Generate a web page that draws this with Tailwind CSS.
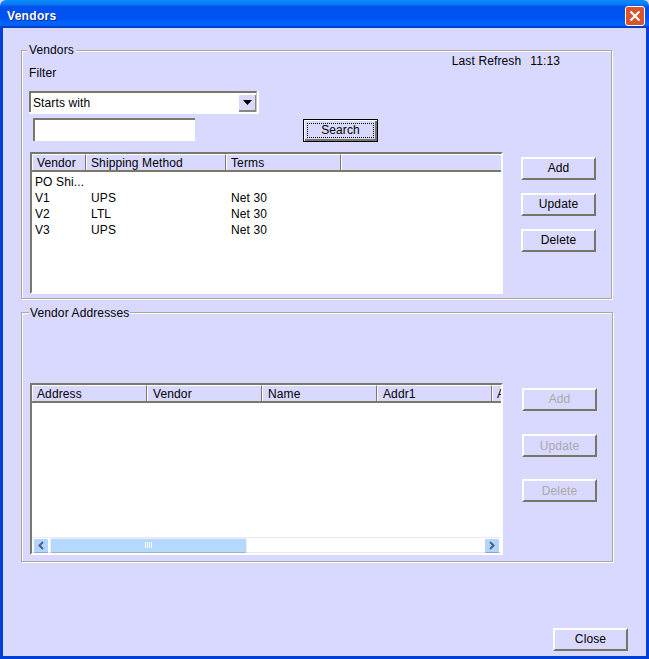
<!DOCTYPE html>
<html lang="en">
<head>
    <meta charset="UTF-8">
    <title>Vendors</title>
    <script src="https://cdn.jsdelivr.net/npm/@tailwindcss/browser@4"></script>
</head>
<body class="bg-[#d9d9ff]">
<div class="w-[649px] h-[659px] flex flex-col overflow-hidden bg-[#d9d9ff] text-[12px] leading-[16px] tracking-[0.12px] text-black font-['Liberation_Sans',Arial,sans-serif]">

    <!-- title bar -->
    <div class="h-[28px] shrink-0 flex items-center justify-between pl-[7px] pr-[4px] pt-[3px] bg-[linear-gradient(#0a8cfa_0,#0a7cf5_4px,#0052ee_7px,#0052f0_18px,#0062fc_22px,#0062fc_26px,#0040c8_26px)] rounded-t-[6px]">
        <span class="font-bold text-white tracking-[0.3px] [text-shadow:1px_1px_0_#0a2a90]">Vendors</span>
        <div class="w-[20px] h-[20px] rounded-[3px] border border-white bg-[#d9532c] flex items-center justify-center">
            <svg width="12" height="12" viewBox="0 0 12 12"><path d="M1.5 1.5L10.5 10.5M10.5 1.5L1.5 10.5" stroke="#fff" stroke-width="2.2"/></svg>
        </div>
    </div>

    <!-- window body -->
    <div class="flex-1 flex flex-col border-x-[3px] border-b-[3px] border-[#0040d8] pl-[18px] pr-[18px] pt-[22px]">

        <!-- Vendors group -->
        <div class="relative w-[591px] h-[249px] border border-[#aca899] shadow-[inset_1px_1px_0_#fff,1px_1px_0_#fff] pl-[7px]">
            <span class="absolute left-[5px] top-[-9px] px-[2px] bg-[#d9d9ff]">Vendors</span>
            <div class="h-[40px] flex justify-between pr-[51px]">
                <span class="pt-[14px]">Filter</span>
                <span class="pt-[2px] flex gap-[9px]"><span>Last Refresh</span><span>11:13</span></span>
            </div>
            <div class="w-[230px] h-[23px] bg-white flex items-start">
                <div class="w-[228px] h-[21px] border-t-2 border-l-2 border-t-[#7a7868] border-l-[#7a7868] border-r border-r-[#c8c6b8] flex items-center justify-between pl-[2px]">
                    <span>Starts with</span>
                    <div class="w-[17px] h-[17px] mt-[1px] bg-[#d9d9ff] border-r border-b-2 border-[#8a8878] flex items-center justify-center">
                        <svg width="9" height="5" viewBox="0 0 9 5"><path d="M0 0H9L4.5 5Z" fill="#000"/></svg>
                    </div>
                </div>
            </div>
            <div class="mt-[4px] h-[24px] flex items-start">
                <div class="ml-[4px] w-[162px] h-[23px] bg-white border-t-2 border-l-2 border-t-[#7a7868] border-l-[#7a7868]"></div>
                <button class="ml-[108px] mt-[1px] w-[75px] h-[23px] border border-black bg-[#d9d9ff] shadow-[inset_1px_1px_0_#fff,inset_-2px_-2px_0_#77756a] p-[3px]">
                    <span class="w-full h-full border border-dotted border-black flex items-center justify-center pb-[2px]">Search</span>
                </button>
            </div>
            <div class="mt-[10px] flex items-start">
                <div class="ml-[1px] w-[473px] h-[142px] flex flex-col bg-white border-t-[2px] border-l-[2px] border-[#7a7868] border-r-[2px] border-b-[2px] border-r-white border-b-white">
                    <div class="h-[18px] shrink-0 flex bg-[#d9d9ff] border-b-2 border-[#7a7868]">
                        <div class="w-[54px] border-l border-t border-white border-r border-r-[#7a7868] pl-[4px] pt-[1px] leading-[15px]">Vendor</div>
                        <div class="w-[140px] border-l border-t border-white border-r border-r-[#7a7868] pl-[4px] pt-[1px] leading-[15px]">Shipping Method</div>
                        <div class="w-[115px] border-l border-t border-white border-r border-r-[#7a7868] pl-[4px] pt-[1px] leading-[15px]">Terms</div>
                        <div class="flex-1 border-l border-t border-white"></div>
                    </div>
                    <div class="pt-[2px]">
                        <div class="h-[16px] flex"><span class="w-[54px] pl-[3px]">PO Shi...</span></div>
                        <div class="h-[16px] flex"><span class="w-[54px] pl-[3px]">V1</span><span class="w-[140px] pl-[5px]">UPS</span><span class="pl-[5px]">Net 30</span></div>
                        <div class="h-[16px] flex"><span class="w-[54px] pl-[3px]">V2</span><span class="w-[140px] pl-[5px]">LTL</span><span class="pl-[5px]">Net 30</span></div>
                        <div class="h-[16px] flex"><span class="w-[54px] pl-[3px]">V3</span><span class="w-[140px] pl-[5px]">UPS</span><span class="pl-[5px]">Net 30</span></div>
                    </div>
                </div>
                <div class="ml-[18px] mt-[5px] flex flex-col gap-[13px]">
                    <button class="w-[75px] h-[23px] pb-[2px] border-2 border-t-white border-l-white border-b-[#77756a] border-r-[#77756a] bg-[#d9d9ff]">Add</button>
                    <button class="w-[75px] h-[23px] pb-[2px] border-2 border-t-white border-l-white border-b-[#77756a] border-r-[#77756a] bg-[#d9d9ff]">Update</button>
                    <button class="w-[75px] h-[23px] pb-[2px] border-2 border-t-white border-l-white border-b-[#77756a] border-r-[#77756a] bg-[#d9d9ff]">Delete</button>
                </div>
            </div>
        </div>

        <!-- Vendor Addresses group -->
        <div class="relative mt-[13px] w-[592px] h-[250px] border border-[#aca899] shadow-[inset_1px_1px_0_#fff,1px_1px_0_#fff] pl-[8px] pt-[70px]">
            <span class="absolute left-[7px] top-[-8px] px-[1px] bg-[#d9d9ff]">Vendor Addresses</span>
            <div class="flex items-start">
                <div class="w-[473px] h-[172px] flex flex-col bg-white border-t-[2px] border-l-[2px] border-[#7a7868] border-r-[2px] border-b-[2px] border-r-white border-b-white">
                    <div class="h-[18px] shrink-0 flex overflow-hidden bg-[#d9d9ff] border-b-2 border-[#7a7868]">
                        <div class="w-[115px] shrink-0 border-l border-t border-white border-r border-r-[#7a7868] pl-[4px] pt-[1px] leading-[15px]">Address</div>
                        <div class="w-[115px] shrink-0 border-l border-t border-white border-r border-r-[#7a7868] pl-[5px] pt-[1px] leading-[15px]">Vendor</div>
                        <div class="w-[115px] shrink-0 border-l border-t border-white border-r border-r-[#7a7868] pl-[5px] pt-[1px] leading-[15px]">Name</div>
                        <div class="w-[115px] shrink-0 border-l border-t border-white border-r border-r-[#7a7868] pl-[5px] pt-[1px] leading-[15px]">Addr1</div>
                        <div class="flex-1 border-l border-t border-white pl-[4px] pt-[1px] leading-[15px]">A</div>
                    </div>
                    <div class="flex-1"></div>
                    <!-- horizontal scrollbar -->
                    <div class="h-[16px] shrink-0 flex items-center border-y border-[#f3e4f5] bg-white">
                        <div class="w-[16px] h-[15px] ml-[1px] rounded-[2px] border border-white border-b-[#8fa5c8] bg-[#b4d5fb] flex items-center justify-center">
                            <svg width="8" height="9" viewBox="0 0 8 9"><path d="M6 1L2.5 4.5L6 8" fill="none" stroke="#4d6185" stroke-width="2"/></svg>
                        </div>
                        <div class="w-[197px] h-[15px] ml-[1px] rounded-[2px] border border-[#e8eefc] border-b-[#a3b4b8] bg-[#b4d8fe] flex items-center justify-center gap-[1px]">
                            <span class="w-[1px] h-[6px] bg-white"></span><span class="w-[1px] h-[6px] bg-white"></span><span class="w-[1px] h-[6px] bg-white"></span><span class="w-[1px] h-[6px] bg-white"></span>
                        </div>
                        <div class="flex-1"></div>
                        <div class="w-[16px] h-[15px] mr-[1px] rounded-[2px] border border-white border-b-[#8fa5c8] bg-[#b4d5fb] flex items-center justify-center">
                            <svg width="8" height="9" viewBox="0 0 8 9"><path d="M2 1L5.5 4.5L2 8" fill="none" stroke="#4d6185" stroke-width="2"/></svg>
                        </div>
                    </div>
                </div>
                <div class="ml-[19px] mt-[5px] flex flex-col text-[#a9a9a9] [text-shadow:1px_1px_0_#fff]">
                    <button disabled class="w-[75px] h-[23px] pb-[2px] border-2 border-t-white border-l-white border-b-[#77756a] border-r-[#77756a] bg-[#d9d9ff]">Add</button>
                    <button disabled class="mt-[23px] w-[75px] h-[23px] border-2 border-t-white border-l-white border-b-[#77756a] border-r-[#77756a] bg-[#d9d9ff]">Update</button>
                    <button disabled class="mt-[22px] w-[75px] h-[23px] border-2 border-t-white border-l-white border-b-[#77756a] border-r-[#77756a] bg-[#d9d9ff]">Delete</button>
                </div>
            </div>
        </div>

        <div class="mt-[66px] flex justify-end">
            <button class="w-[75px] h-[23px] pb-[2px] border-2 border-t-white border-l-white border-b-[#77756a] border-r-[#77756a] bg-[#d9d9ff]">Close</button>
        </div>
    </div>
</div>
</body>
</html>
